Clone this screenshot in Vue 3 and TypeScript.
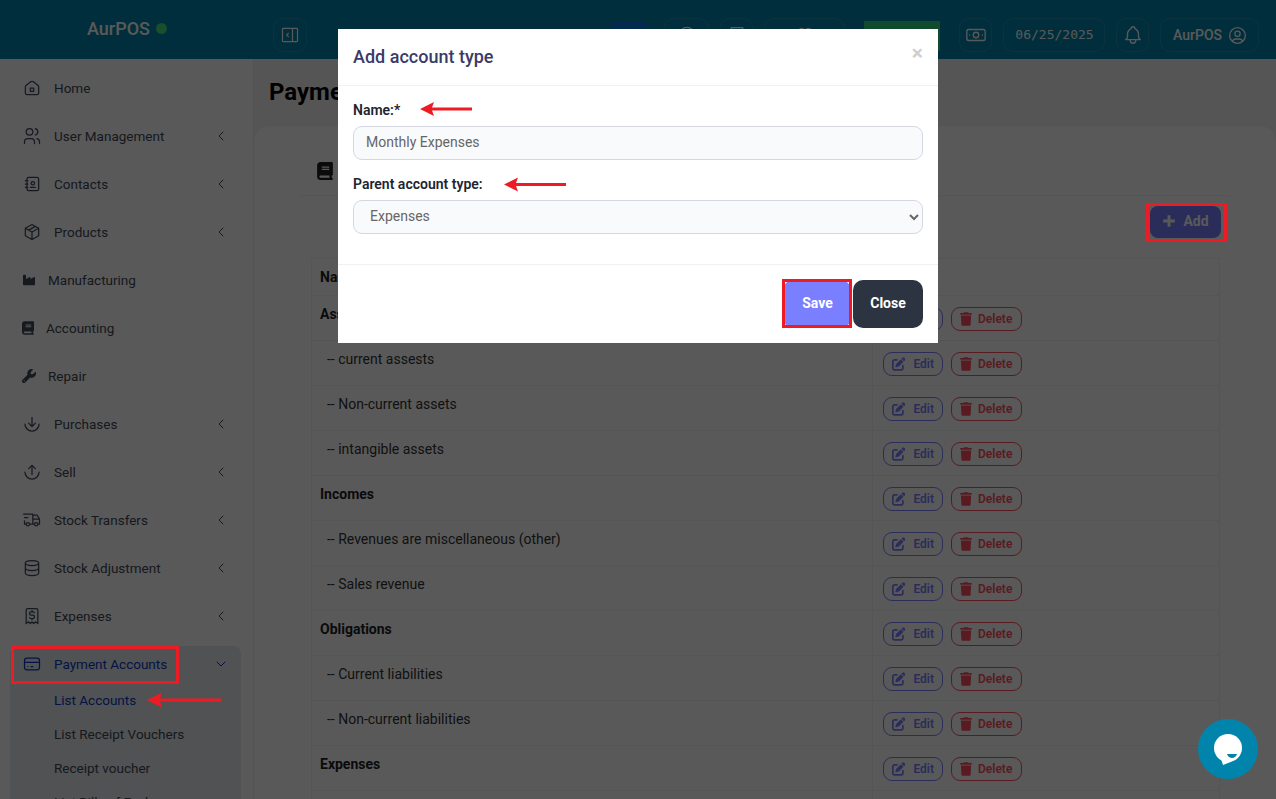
<script setup lang="ts">
import { ref } from "vue";

interface NavItem {
  label: string;
  d: string;
  solid?: { box: string; w: number; h: number };
  arrow?: boolean;
}

const bookPath =
  "M96 0C43 0 0 43 0 96V416c0 53 43 96 96 96H384h32c17.7 0 32-14.3 32-32s-14.3-32-32-32V384c17.7 0 32-14.3 32-32V32c0-17.7-14.3-32-32-32H384 96zm0 384H352v64H96c-17.7 0-32-14.3-32-32s14.3-32 32-32zm32-240c0-8.8 7.2-16 16-16H336c8.8 0 16 7.2 16 16s-7.2 16-16 16H144c-8.8 0-16-7.2-16-16zm16 48H336c8.8 0 16 7.2 16 16s-7.2 16-16 16H144c-8.8 0-16-7.2-16-16s7.2-16 16-16z";
const editPath =
  "M471.6 21.7c-21.9-21.9-57.3-21.9-79.2 0L362.3 51.7l97.9 97.9 30.1-30.1c21.9-21.9 21.9-57.3 0-79.2L471.6 21.7zm-299.2 220c-6.1 6.1-10.8 13.6-13.5 21.9l-29.6 88.8c-2.9 8.6-.6 18.1 5.8 24.6s15.9 8.7 24.6 5.8l88.8-29.6c8.2-2.7 15.7-7.4 21.9-13.5L437.7 172.3 339.7 74.3 172.4 241.7zM96 64C43 64 0 107 0 160V416c0 53 43 96 96 96H352c53 0 96-43 96-96V320c0-17.7-14.3-32-32-32s-32 14.3-32 32v96c0 17.7-14.3 32-32 32H96c-17.7 0-32-14.3-32-32V160c0-17.7 14.3-32 32-32h96c17.7 0 32-14.3 32-32s-14.3-32-32-32H96z";
const trashPath =
  "M135.2 17.7L128 32H32C14.3 32 0 46.3 0 64S14.3 96 32 96H416c17.7 0 32-14.3 32-32s-14.3-32-32-32H320l-7.2-14.3C307.4 6.8 296.3 0 284.2 0H163.8c-12.1 0-23.2 6.8-28.6 17.7zM416 128H32L53.2 467c1.6 25.3 22.6 45 47.9 45H346.9c25.3 0 46.3-19.7 47.9-45L416 128z";

const navItems: NavItem[] = [
  {
    label: "Home",
    d: "M19 8.71l-5.333 -4.148a2.666 2.666 0 0 0 -3.274 0l-5.334 4.148a2.665 2.665 0 0 0 -1.029 2.105v7.2a2 2 0 0 0 2 2h12a2 2 0 0 0 2 -2v-7.2c0 -.823 -.38 -1.6 -1.03 -2.105M10 12h4v4h-4z",
  },
  {
    label: "User Management",
    arrow: true,
    d: "M9 7m-4 0a4 4 0 1 0 8 0a4 4 0 1 0 -8 0M3 21v-2a4 4 0 0 1 4 -4h4a4 4 0 0 1 4 4v2M16 3.13a4 4 0 0 1 0 7.75M21 21v-2a4 4 0 0 0 -3 -3.85",
  },
  {
    label: "Contacts",
    arrow: true,
    d: "M20 6v12a2 2 0 0 1 -2 2h-10a2 2 0 0 1 -2 -2v-12a2 2 0 0 1 2 -2h10a2 2 0 0 1 2 2zM10 16h6M13 11m-2 0a2 2 0 1 0 4 0a2 2 0 1 0 -4 0M4 8h3M4 12h3M4 16h3",
  },
  {
    label: "Products",
    arrow: true,
    d: "M12 3l8 4.5l0 9l-8 4.5l-8 -4.5l0 -9l8 -4.5M12 12l8 -4.5M12 12l0 9M12 12l-8 -4.5M16 5.25l-8 4.5",
  },
  {
    label: "Manufacturing",
    solid: { box: "0 0 576 512", w: 14, h: 12 },
    d: "M64 32C46.3 32 32 46.3 32 64V304v48 80c0 26.5 21.5 48 48 48H496c26.5 0 48-21.5 48-48V304 152.2c0-18.2-19.4-29.7-35.4-21.1L352 215.4V152.2c0-18.2-19.4-29.7-35.4-21.1L160 215.4V64c0-17.7-14.3-32-32-32H64z",
  },
  {
    label: "Accounting",
    solid: { box: "0 0 448 512", w: 12, h: 14 },
    d: bookPath,
  },
  {
    label: "Repair",
    solid: { box: "0 0 512 512", w: 14, h: 14 },
    d: "M352 320c88.4 0 160-71.6 160-160c0-15.3-2.2-30.1-6.2-44.2c-3.1-10.8-16.4-13.2-24.3-5.3l-76.8 76.8c-3 3-7.1 4.7-11.3 4.7H336c-8.8 0-16-7.2-16-16V118.6c0-4.2 1.7-8.3 4.7-11.3l76.8-76.8c7.9-7.9 5.4-21.2-5.3-24.3C382.1 2.2 367.3 0 352 0C263.6 0 192 71.6 192 160c0 19.1 3.4 37.5 9.5 54.5L19.9 396.1C7.2 408.8 0 426.1 0 444.1C0 481.6 30.4 512 67.9 512c18 0 35.3-7.2 48-19.9L297.5 310.5c17 6.2 35.4 9.5 54.5 9.5zM80 408a24 24 0 1 1 0 48 24 24 0 1 1 0-48z",
  },
  {
    label: "Purchases",
    arrow: true,
    d: "M12 4v11M8 11l4 4l4 -4M3.5 12a8.5 8.5 0 0 0 17 0",
  },
  {
    label: "Sell",
    arrow: true,
    d: "M12 15v-11M8 8l4 -4l4 4M3.5 12a8.5 8.5 0 0 0 17 0",
  },
  {
    label: "Stock Transfers",
    arrow: true,
    d: "M7 17m-2 0a2 2 0 1 0 4 0a2 2 0 1 0 -4 0M17 17m-2 0a2 2 0 1 0 4 0a2 2 0 1 0 -4 0M5 17h-2v-4m-1 -8h11v12m-4 0h6m4 0h2v-6h-8m0 -5h5l3 5M3 9l4 0",
  },
  {
    label: "Stock Adjustment",
    arrow: true,
    d: "M12 6m-8 0a8 3 0 1 0 16 0a8 3 0 1 0 -16 0M4 6v6a8 3 0 0 0 16 0v-6M4 12v6a8 3 0 0 0 16 0v-6",
  },
  {
    label: "Expenses",
    arrow: true,
    d: "M5 21v-16a2 2 0 0 1 2 -2h10a2 2 0 0 1 2 2v16l-3 -2l-2 2l-2 -2l-2 2l-2 -2l-3 2M14.8 8a2 1.5 0 0 0 -1.8 -1h-2a2 2 0 0 0 0 4h2a2 2 0 0 1 0 4h-2a2 1.5 0 0 1 -1.8 -1M12 5.5v1.5M12 15v1.5",
  },
];

const subItems = [
  "List Accounts",
  "List Receipt Vouchers",
  "Receipt voucher",
  "List Bills of Exchange",
];

const rows = [
  { name: "Assets", parent: true },
  { name: "current assests" },
  { name: "Non-current assets" },
  { name: "intangible assets" },
  { name: "Incomes", parent: true },
  { name: "Revenues are miscellaneous (other)" },
  { name: "Sales revenue" },
  { name: "Obligations", parent: true },
  { name: "Current liabilities" },
  { name: "Non-current liabilities" },
  { name: "Expenses", parent: true },
];

const accountName = ref("Monthly Expenses");
const parentType = ref("Expenses");
</script>

<template>
  <div class="page">
    <header class="topbar">
      <div class="brand">AurPOS<span class="dot"></span></div>
      <button class="box toggle" type="button" aria-label="Toggle sidebar">
        <svg viewBox="0 0 24 24" width="20" height="20" class="line">
          <path d="M4 4h16a1 1 0 0 1 1 1v14a1 1 0 0 1 -1 1h-16a1 1 0 0 1 -1 -1v-14a1 1 0 0 1 1 -1zM15 4v16M10 10l-2 2l2 2" />
        </svg>
      </button>
      <div class="top-actions">
        <span class="lang"></span>
        <span class="box wide-45">
          <svg viewBox="0 0 24 24" width="20" height="20" class="line"><path d="M12 12m-9 0a9 9 0 1 0 18 0a9 9 0 1 0 -18 0" /></svg>
        </span>
        <span class="box">
          <svg viewBox="0 0 24 24" width="20" height="20" class="line"><path d="M5 3h14v18h-14z" /></svg>
        </span>
        <span class="box wide-81">
          <svg viewBox="0 0 24 24" width="20" height="20" class="line"><path d="M8 7m-3 0a3 3 0 1 0 6 0a3 3 0 1 0 -6 0M16 7m-3 0a3 3 0 1 0 6 0a3 3 0 1 0 -6 0" /></svg>
        </span>
        <span class="pos-btn">POS</span>
        <span class="box spaced">
          <svg viewBox="0 0 24 24" width="22" height="22" class="line">
            <path d="M4 6h16a2 2 0 0 1 2 2v8a2 2 0 0 1 -2 2h-16a2 2 0 0 1 -2 -2v-8a2 2 0 0 1 2 -2zM12 12m-3 0a3 3 0 1 0 6 0a3 3 0 1 0 -6 0M5 12h.01M19 12h.01" />
          </svg>
        </span>
        <span class="box date">06/25/2025</span>
        <span class="box">
          <svg viewBox="0 0 24 24" width="22" height="22" class="line">
            <path d="M10 5a2 2 0 1 1 4 0a7 7 0 0 1 4 6v3a4 4 0 0 0 2 3h-16a4 4 0 0 0 2 -3v-3a7 7 0 0 1 4 -6M9 17v1a3 3 0 0 0 6 0v-1" />
          </svg>
        </span>
        <span class="box user">
          AurPOS
          <svg viewBox="0 0 24 24" width="21" height="21" class="line">
            <path d="M12 12m-9 0a9 9 0 1 0 18 0a9 9 0 1 0 -18 0M12 10m-3 0a3 3 0 1 0 6 0a3 3 0 1 0 -6 0M6.2 18.8a4 4 0 0 1 3.8 -2.8h4a4 4 0 0 1 3.8 2.8" />
          </svg>
        </span>
      </div>
    </header>

    <div class="layout">
      <aside class="sidebar">
        <a v-for="item in navItems" :key="item.label" class="nav-item">
          <svg
            v-if="item.solid"
            :viewBox="item.solid.box"
            :width="item.solid.w"
            :height="item.solid.h"
            class="solid"
          >
            <path :d="item.d" />
          </svg>
          <svg v-else viewBox="0 0 24 24" width="20" height="20" class="line">
            <path :d="item.d" />
          </svg>
          <span class="nav-label">{{ item.label }}</span>
          <svg v-if="item.arrow" viewBox="0 0 24 24" width="16" height="16" class="line">
            <path d="M15 6l-6 6l6 6" />
          </svg>
        </a>

        <div class="nav-group">
          <a class="nav-item active">
            <svg viewBox="0 0 24 24" width="20" height="20" class="line">
              <path d="M3 8a3 3 0 0 1 3 -3h12a3 3 0 0 1 3 3v8a3 3 0 0 1 -3 3h-12a3 3 0 0 1 -3 -3zM3 10h18M7 15h.01M11 15h2" />
            </svg>
            <span class="nav-label">Payment Accounts</span>
            <svg viewBox="0 0 24 24" width="16" height="16" class="line">
              <path d="M6 9l6 6l6 -6" />
            </svg>
          </a>
          <a
            v-for="(sub, i) in subItems"
            :key="sub"
            class="sub-item"
            :class="{ current: i === 0 }"
            >{{ sub }}</a
          >
        </div>
      </aside>

      <main class="content">
        <h1 class="page-title">Payment Accounts</h1>
        <section class="card">
          <div class="card-head">
            <svg viewBox="0 0 448 512" width="16" height="18" class="solid"><path :d="bookPath" /></svg>
            <span>Account types</span>
          </div>
          <div class="toolbar">
            <button class="add-btn" type="button">
              <svg viewBox="0 0 24 24" width="14" height="14" class="plus"><path d="M12 2v20M2 12h20" /></svg>
              Add
            </button>
          </div>
          <table class="types">
            <thead>
              <tr>
                <th class="name-col">Name</th>
                <th>Action</th>
              </tr>
            </thead>
            <tbody>
              <tr v-for="row in rows" :key="row.name">
                <td :class="row.parent ? 'parent' : 'child'">
                  {{ row.parent ? row.name : `-- ${row.name}` }}
                </td>
                <td class="actions">
                  <button class="act edit" type="button">
                    <svg viewBox="0 0 512 512" width="14" height="14"><path :d="editPath" /></svg>
                    Edit
                  </button>
                  <button class="act del" type="button">
                    <svg viewBox="0 0 448 512" width="12" height="14"><path :d="trashPath" /></svg>
                    Delete
                  </button>
                </td>
              </tr>
              <tr>
                <td></td>
                <td></td>
              </tr>
            </tbody>
          </table>
        </section>
      </main>
    </div>

    <div class="overlay">
      <div class="modal">
        <div class="modal-head">
          <h2>Add account type</h2>
          <span class="modal-x">×</span>
        </div>
        <div class="modal-body">
          <label class="field-label" for="acc-name">Name:*</label>
          <input id="acc-name" v-model="accountName" class="control" type="text" />
          <label class="field-label" for="acc-parent">Parent account type:</label>
          <select id="acc-parent" v-model="parentType" class="control">
            <option>Assets</option>
            <option>Incomes</option>
            <option>Obligations</option>
            <option>Expenses</option>
          </select>
        </div>
        <div class="modal-foot">
          <button class="btn save" type="button">Save</button>
          <button class="btn close" type="button">Close</button>
        </div>
      </div>
    </div>

    <button class="chat" type="button" aria-label="Chat">
      <svg viewBox="0 0 30 32" width="30" height="32">
        <circle cx="15" cy="15" r="14" fill="#fff" />
        <path fill="#fff" d="M8 26l2 6l9 -3.500z" />
        <path fill="#0084ab" d="M14 21h10c-.8 2.600 -2.800 4 -5 4s-4.200 -1.400 -5 -4z" />
      </svg>
    </button>

    <svg class="annotations" width="1276" height="799" viewBox="0 0 1276 799">
      <g fill="none" stroke="#ed1c24" stroke-width="3">
        <rect x="12.500" y="647.500" width="165" height="35" />
        <rect x="1147.500" y="204.500" width="78" height="36" />
        <rect x="783.500" y="280.500" width="67" height="46" />
      </g>
      <g fill="#ed1c24">
        <path d="M147 700l15 -7.500l-2 6h61v3h-61l2 6z" />
        <path d="M420 109l14 -7l-2 5.500h40v3h-40l2 5.500z" />
        <path d="M504 184.500l14 -7l-2 5.500h50v3h-50l2 5.500z" />
      </g>
    </svg>
  </div>
</template>

<style>
html,
body {
  margin: 0;
  overflow: hidden;
}
</style>

<style scoped>
.page {
  position: relative;
  height: 100vh;
  overflow: hidden;
  display: flex;
  flex-direction: column;
  background: #f2f4f7;
  font-family: Roboto, "Liberation Sans", sans-serif;
  font-size: 14px;
  color: #333;
}

.line {
  fill: none;
  stroke: currentColor;
  stroke-width: 1.5;
  stroke-linecap: round;
  stroke-linejoin: round;
  flex-shrink: 0;
}

.solid {
  fill: currentColor;
  flex-shrink: 0;
}

/* top bar */
.topbar {
  flex: 0 0 59px;
  box-sizing: border-box;
  padding-top: 11px;
  display: flex;
  align-items: center;
  background: #0084ab;
  color: #fff;
}

.brand {
  width: 254px;
  padding-left: 87px;
  box-sizing: border-box;
  display: flex;
  align-items: center;
  gap: 6px;
  font-size: 18px;
  font-weight: 500;
  margin-bottom: 14px;
}

.dot {
  width: 11px;
  height: 11px;
  border-radius: 50%;
  background: #4ade80;
}

.box {
  height: 34px;
  min-width: 33px;
  box-sizing: border-box;
  display: inline-flex;
  align-items: center;
  justify-content: center;
  border: 1px solid rgba(255, 255, 255, 0.12);
  border-radius: 10px;
  background: transparent;
  color: #fff;
  padding: 0;
}

.toggle {
  margin-left: 19px;
  width: 34px;
}

.top-actions {
  margin-left: auto;
  margin-right: 17px;
  display: flex;
  align-items: center;
  gap: 11px;
}

.lang {
  width: 33px;
  height: 26px;
  margin-right: 8px;
  background: #0a75e0;
  border-radius: 2px;
}

.wide-45 {
  width: 45px;
}

.wide-81 {
  width: 81px;
}

.pos-btn {
  width: 76px;
  height: 30px;
  margin: 2px 0 0 8px;
  background: #2fd67f;
  display: flex;
  align-items: center;
  justify-content: center;
  font-weight: 700;
}

.spaced {
  margin-left: 8px;
}

.date {
  width: 102px;
  padding: 0 0 2px 1px;
  font-family: "DejaVu Sans Mono", monospace;
  font-size: 13px;
}

.user {
  width: 99px;
  gap: 5px;
  padding-left: 2px;
  font-weight: 500;
}

/* sidebar */
.layout {
  flex: 1;
  min-height: 0;
  display: flex;
}

.sidebar {
  flex: 0 0 254px;
  box-sizing: border-box;
  padding: 11px 12px 0 10px;
  display: flex;
  flex-direction: column;
  gap: 12px;
  background: #fff;
  border-right: 1px solid #eceef1;
  color: #414a57;
  font-size: 13.5px;
}

.nav-item {
  flex: 0 0 36px;
  height: 36px;
  padding: 0 12px;
  display: flex;
  align-items: center;
  gap: 12px;
}

.nav-label {
  flex: 1;
}

.nav-group {
  flex: 0 0 400px;
  background: #e8eaed;
  border-radius: 8px 8px 0 0;
}

.nav-item.active {
  color: #0a3bc4;
}

.sub-item {
  display: flex;
  align-items: center;
  height: 34px;
  padding-left: 44px;
}

.nav-item.active + .sub-item {
  margin-top: 1px;
}

.sub-item.current {
  color: #0a3bc4;
}

/* content */
.content {
  flex: 1;
  min-width: 0;
  display: flex;
  flex-direction: column;
}

.page-title {
  margin: 0;
  height: 66px;
  padding-left: 15px;
  font-size: 24px;
  line-height: 66px;
  font-weight: 700;
  color: #000;
}

.card {
  flex: 1;
  padding: 20px 46px 0;
  background: #fff;
  border-top: 1px solid #eceef1;
  border-radius: 16px 16px 0 0;
}

.card-head {
  height: 50px;
  box-sizing: border-box;
  padding-left: 17px;
  display: flex;
  align-items: center;
  gap: 6px;
  border-bottom: 1px solid #f1f2f4;
  font-size: 16px;
  font-weight: 500;
  color: #222;
}

.toolbar {
  display: flex;
  justify-content: flex-end;
  padding: 10px 9px 0 0;
}

.add-btn {
  width: 71px;
  height: 32px;
  padding: 0 0 2px;
  border: 0;
  border-radius: 8px;
  display: inline-flex;
  align-items: center;
  justify-content: center;
  gap: 7px;
  background: #7a7fff;
  color: #fff;
  font: 700 14px Roboto, "Liberation Sans", sans-serif;
}

.plus {
  fill: none;
  stroke: currentColor;
  stroke-width: 5;
}

.types {
  width: 909px;
  margin: 20px 0 0 11px;
  border-collapse: separate;
  border-spacing: 0;
  table-layout: fixed;
  border-left: 1px solid #f1f2f4;
  border-top: 1px solid #f1f2f4;
}

.types th,
.types td {
  box-sizing: border-box;
  padding: 8px;
  line-height: 20px;
  height: 45px;
  vertical-align: top;
  text-align: left;
  border-right: 1px solid #f1f2f4;
  border-bottom: 1px solid #f1f2f4;
}

.types th {
  height: 36px;
  font-weight: 700;
  color: #1e1e24;
}

.name-col {
  width: 561px;
}

.types .parent {
  font-weight: 700;
  color: #1e1e24;
}

.types .child {
  padding-left: 15px;
}

.types .actions {
  padding: 11px 0 0 10px;
  font-size: 0;
}

.act {
  height: 24px;
  box-sizing: border-box;
  padding: 0 8px 1px;
  border: 1px solid;
  border-radius: 9px;
  background: transparent;
  display: inline-flex;
  align-items: center;
  gap: 8px;
  font: 600 12px Roboto, "Liberation Sans", sans-serif;
  vertical-align: top;
}

.act svg {
  fill: currentColor;
}

.edit {
  width: 60px;
  color: #7a7fff;
  margin-right: 8px;
}

.del {
  width: 71px;
  color: #ff4d5e;
  gap: 6px;
}

/* modal */
.overlay {
  position: fixed;
  inset: 0;
  display: flex;
  justify-content: center;
  align-items: flex-start;
  padding-top: 29px;
  background: rgba(0, 0, 0, 0.65);
}

.modal {
  width: 600px;
  background: #fff;
}

.modal-head {
  height: 57px;
  box-sizing: border-box;
  padding: 0 15px 2px;
  display: flex;
  align-items: center;
  justify-content: space-between;
  border-bottom: 1px solid #f0f1f3;
}

.modal-head h2 {
  margin: 0;
  font-size: 18px;
  font-weight: 500;
  color: #3b3a68;
}

.modal-x {
  position: relative;
  top: -3px;
  font-size: 21px;
  font-weight: 700;
  color: #cfcfcf;
}

.modal-body {
  padding: 15px 15px 30px;
  height: 179px;
  box-sizing: border-box;
  border-bottom: 1px solid #f0f1f3;
}

.field-label {
  display: block;
  margin-bottom: 7px;
  font-weight: 600;
  line-height: 18px;
  color: #1e2530;
}

.control {
  display: block;
  width: 100%;
  height: 34px;
  box-sizing: border-box;
  margin-bottom: 15px;
  padding: 0 12px 2px;
  background-color: #f9fafb;
  border: 1px solid #d5d8e3;
  border-radius: 9px;
  color: #666;
  font: 400 14px Roboto, "Liberation Sans", sans-serif;
  outline: none;
}

.modal-foot {
  height: 78px;
  box-sizing: border-box;
  padding: 15px;
  display: flex;
  justify-content: flex-end;
  gap: 2px;
}

.btn {
  height: 48px;
  padding: 0 0 2px;
  border: 0;
  border-radius: 10px;
  color: #fff;
  font: 700 14px Roboto, "Liberation Sans", sans-serif;
}

.save {
  width: 68px;
  padding-left: 1px;
  background: #7a7fff;
}

.close {
  width: 70px;
  background: #2b3440;
}

/* over everything */
.chat {
  position: fixed;
  left: 1198px;
  top: 719px;
  width: 60px;
  height: 60px;
  padding: 0;
  border: 0;
  border-radius: 50%;
  background: #0084ab;
  display: flex;
  align-items: center;
  justify-content: center;
}

.annotations {
  position: fixed;
  inset: 0;
  pointer-events: none;
}
</style>
